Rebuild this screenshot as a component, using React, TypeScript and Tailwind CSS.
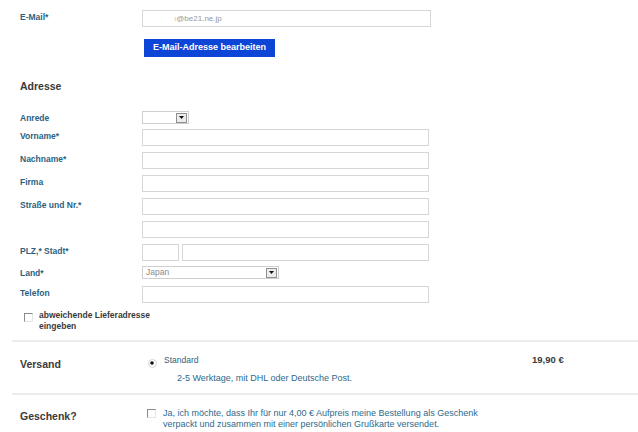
import React from "react";

const labelCls = "w-[122px] shrink-0 pt-[1px] text-[8.5px] leading-[12px] font-bold text-[#2d5f80]";
const inputCls = "h-[17px] border border-[#d6d6d6] bg-white";

function Row({ label, children, className = "" }: { label?: string; children: React.ReactNode; className?: string }) {
  return (
    <div className={`flex items-start ${className}`}>
      <div className={labelCls}>{label}</div>
      {children}
    </div>
  );
}

function SelectBox({ width, value }: { width: string; value?: string }) {
  return (
    <div className={`flex h-[13px] items-center justify-between border border-[#cfcfcf] bg-white ${width}`}>
      <span className="pl-[3px] text-[8.5px] leading-none text-[#8a8a8a]">{value}</span>
      <span className="mr-[1px] flex h-[10px] w-[11px] items-center justify-center border border-[#8f8f8f] bg-[#ececec]">
        <svg width="5" height="3" viewBox="0 0 5 3">
          <path d="M0 0h5L2.5 3z" fill="#111" />
        </svg>
      </span>
    </div>
  );
}

function Check() {
  return <span className="block h-[9px] w-[9px] shrink-0 border border-t-[#8a8a8a] border-l-[#8a8a8a] border-b-[#e4e4e4] border-r-[#e4e4e4] bg-white" />;
}

export default function App() {
  return (
    <div className="h-[432px] w-[638px] overflow-hidden bg-white" style={{ fontFamily: '"Liberation Sans", Arial, sans-serif' }}>
      <div className="pl-[20px] pt-[10px]">
        <Row label="E-Mail*" className="h-[17px]">
          <div className={`${inputCls} flex w-[289px] items-center bg-[#fbfbfb] pl-[31px] text-[8px] text-[#9a9a9a]`}>
            <span className="text-[#c4c4c4]">ı</span>@be21.ne.jp
          </div>
        </Row>
        <div className="ml-[124px] mt-[12px] flex h-[18px] w-[131px] items-center justify-center bg-[#0d45d6] text-[9px] font-bold text-white">
          E-Mail-Adresse bearbeiten
        </div>

        <div className="mt-[22px] h-[14px] text-[10.5px] leading-[14px] font-bold text-[#3a3a3a]">Adresse</div>

        <Row label="Anrede" className="mt-[18px] h-[13px]">
          <SelectBox width="w-[47px]" />
        </Row>
        <Row label="Vorname*" className="mt-[5px] h-[17px]">
          <div className={`${inputCls} w-[287px]`} />
        </Row>
        <Row label="Nachname*" className="mt-[6px] h-[17px]">
          <div className={`${inputCls} w-[287px]`} />
        </Row>
        <Row label="Firma" className="mt-[6px] h-[17px]">
          <div className={`${inputCls} w-[287px]`} />
        </Row>
        <Row label="Straße und Nr.*" className="mt-[6px] h-[17px]">
          <div className={`${inputCls} w-[287px]`} />
        </Row>
        <Row className="mt-[6px] h-[17px]">
          <div className={`${inputCls} w-[287px]`} />
        </Row>
        <Row label="PLZ,* Stadt*" className="mt-[6px] h-[17px]">
          <div className="flex gap-[3px]">
            <div className={`${inputCls} w-[37px]`} />
            <div className={`${inputCls} w-[247px]`} />
          </div>
        </Row>
        <Row label="Land*" className="mt-[5px] h-[13px]">
          <SelectBox width="w-[137px]" value="Japan" />
        </Row>
        <Row label="Telefon" className="mt-[7px] h-[17px]">
          <div className={`${inputCls} w-[287px]`} />
        </Row>

        <div className="ml-[4px] mt-[7px] flex h-[22px] items-start gap-[6px]">
          <span className="mt-[3px]"><Check /></span>
          <div className="text-[8.5px] font-bold leading-[11px] text-[#3a3a3a]">
            abweichende Lieferadresse
            <br />
            eingeben
          </div>
        </div>
      </div>

      <div className="ml-[12px] mt-[8px] h-[2px] bg-[#ececec]" />

      <div className="flex h-[51px] pl-[20px]">
        <div className="w-[128px] shrink-0 pt-[15px] text-[10.5px] leading-[14px] font-bold text-[#3a3a3a]">Versand</div>
        <div className="w-[384px] shrink-0 pt-[12px]">
          <div className="flex h-[12px] items-center gap-[7px]">
            <svg width="9" height="9" viewBox="0 0 9 9" className="mt-[6px]">
              <circle cx="4.5" cy="4.5" r="4" fill="#fff" stroke="#d4d4d4" />
              <circle cx="4" cy="4" r="1.8" fill="#111" />
            </svg>
            <span className="text-[8.5px] leading-[12px] text-[#2d5f80]">Standard</span>
          </div>
          <div className="mt-[6px] pl-[29px] text-[9px] leading-[12px] text-[#2d6a8c]">2-5 Werktage, mit DHL oder Deutsche Post.</div>
        </div>
        <div className="pt-[12px] text-[9.5px] leading-[12px] font-bold text-[#3a3a3a]">19,90 €</div>
      </div>

      <div className="ml-[12px] h-[2px] bg-[#ececec]" />

      <div className="flex pl-[20px]">
        <div className="w-[127px] shrink-0 pt-[14px] text-[10.5px] leading-[14px] font-bold text-[#3a3a3a]">Geschenk?</div>
        <div className="flex gap-[7px] pt-[13px]">
          <span className="mt-[1px]"><Check /></span>
          <div className="text-[9px] leading-[11px] text-[#2d6a8c]">
            Ja, ich möchte, dass Ihr für nur 4,00 € Aufpreis meine Bestellung als Geschenk
            <br />
            verpackt und zusammen mit einer persönlichen Grußkarte versendet.
          </div>
        </div>
      </div>
    </div>
  );
}
